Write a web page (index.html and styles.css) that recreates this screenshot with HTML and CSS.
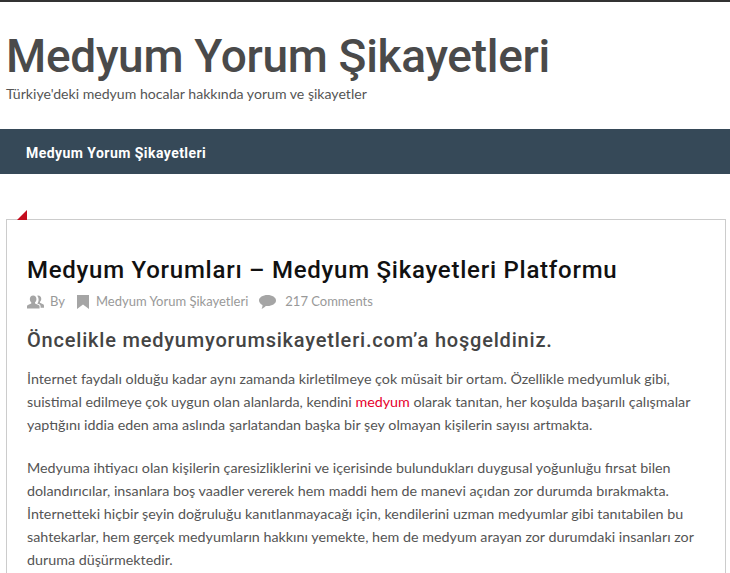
FILE: index.html
```html
<!DOCTYPE html>
<html lang="tr">
<head>
    <meta charset="UTF-8">
    <meta name="viewport" content="width=device-width, initial-scale=1.0">
    <title>Medyum Yorum Şikayetleri</title>
    <link rel="stylesheet" href="styles.css">
</head>
<body>
    <header class="site-header">
        <h1 class="site-title">Medyum Yorum Şikayetleri</h1>
        <p class="site-desc">Türkiye'deki medyum hocalar hakkında yorum ve şikayetler</p>
    </header>
    <nav class="main-nav">
        <a href="#">Medyum Yorum Şikayetleri</a>
    </nav>
    <main class="content">
        <article class="post">
            <span class="corner"></span>
            <h2 class="post-title">Medyum Yorumları – Medyum Şikayetleri Platformu</h2>
            <div class="post-meta">
                <svg class="icon icon-users" viewBox="0 0 18 14"><path d="M6.500 0c2.200 0 3.500 1.700 3.500 3.800 0 1.400-.6 2.800-1.500 3.500v1.200l3.700 1.600c.7.300 1.100.8 1.100 1.500V14H0v-2.400c0-.7.300-1.200 1-1.500l3.500-1.600V7.300C3.600 6.600 3 5.200 3 3.800 3 1.700 4.300 0 6.500 0z"/><path d="M11.800 0c2 0 3.300 1.600 3.300 3.500 0 1.300-.5 2.600-1.400 3.300v1.100l3.300 1.500c.7.300 1 .8 1 1.500V13h-3.600v-1.300c0-1-.6-1.800-1.500-2.200l-2-1c.9-1 1.400-2.500 1.400-4 0-1.300-.4-2.500-1.100-3.500C10.600.3 11.100 0 11.800 0z"/></svg>
                <span class="meta-by">By</span>
                <svg class="icon icon-bookmark" viewBox="0 0 12 14"><path d="M0 0h12v14L6 9.500 0 14z"/></svg>
                <span class="meta-cat">Medyum Yorum Şikayetleri</span>
                <svg class="icon icon-comment" viewBox="0 0 17 14"><path d="M8.500 0C13.200 0 17 2.400 17 5.500S13.200 11 8.500 11c-.6 0-1.200 0-1.700-.1C5.500 12.200 3.800 13.500 2.500 14c.6-1 1-2.400 1-4C1.400 9 0 7.400 0 5.500 0 2.400 3.800 0 8.500 0z"/></svg>
                <span>217 Comments</span>
            </div>
            <h3 class="post-sub">Öncelikle medyumyorumsikayetleri.com’a hoşgeldiniz.</h3>
            <p>İnternet faydalı olduğu kadar aynı zamanda kirletilmeye çok müsait bir ortam. Özellikle medyumluk gibi, suistimal edilmeye çok uygun olan alanlarda, kendini <a href="#">medyum</a> olarak tanıtan, her koşulda başarılı çalışmalar yaptığını iddia eden ama aslında şarlatandan başka bir şey olmayan kişilerin sayısı artmakta.</p>
            <p>Medyuma ihtiyacı olan kişilerin çaresizliklerini ve içerisinde bulundukları duygusal yoğunluğu fırsat bilen dolandırıcılar, insanlara boş vaadler vererek hem maddi hem de manevi açıdan zor durumda bırakmakta. İnternetteki hiçbir şeyin doğruluğu kanıtlanmayacağı için, kendilerini uzman medyumlar gibi tanıtabilen bu sahtekarlar, hem gerçek medyumların hakkını yemekte, hem de medyum arayan zor durumdaki insanları zor duruma düşürmektedir.</p>
        </article>
    </main>
</body>
</html>
```

FILE: styles.css
```css
html{
    height: 100%;
    overflow: hidden;
}
body{
    font-family: Lato, "Open Sans", sans-serif;
    font-size: 14.3px;
    line-height: 23px;
    margin: 0;
    padding: 0;
    color: #555;
    background: #fff;
    border-top: 2px solid #333;
}
.site-header{
    padding: 26px 6px 0;
    height: 101px;
}
.site-title{
    font-family: Roboto, sans-serif;
    font-size: 46px;
    line-height: 56px;
    font-weight: 500;
    letter-spacing: -0.3px;
    color: #4a4a4a;
    margin: 0;
}
.site-desc{
    margin: 0;
    font-size: 14.1px;
    line-height: 20px;
    color: #555;
}
.main-nav{
    background: #364958;
    height: 45px;
    display: flex;
    align-items: center;
    padding-left: 26px;
}
.main-nav a{
    font-family: Roboto, sans-serif;
    font-size: 14px;
    line-height: 20px;
    padding-top: 2px;
    font-weight: 700;
    letter-spacing: 0.45px;
    color: #fff;
    text-decoration: none;
}
.content{
    padding: 45px 4px 0 6px;
}
.post{
    position: relative;
    border: 1px solid #ccc;
    padding: 35px 20px 0;
}
.corner{
    position: absolute;
    top: -10px;
    left: 10px;
    width: 0;
    height: 0;
    border-left: 10px solid transparent;
    border-bottom: 10px solid #c40d1e;
}
.post-title{
    font-family: Roboto, sans-serif;
    font-size: 24px;
    line-height: 30px;
    font-weight: 500;
    letter-spacing: 0.75px;
    color: #111;
    margin: 0;
}
.post-meta{
    display: flex;
    align-items: center;
    margin-top: 5px;
    font-size: 13px;
    color: #999;
}
.icon{
    fill: #a5a5a5;
    height: 14px;
}
.icon-users{ width: 17px; margin-right: 6px; }
.icon-bookmark{ width: 12px; margin-left: 12px; margin-right: 7px; }
.icon-comment{ width: 17px; margin-left: 11px; margin-right: 9px; }
.post-sub{
    font-family: Roboto, sans-serif;
    font-size: 20px;
    line-height: 26px;
    font-weight: 500;
    letter-spacing: 0.8px;
    color: #444;
    margin: 14px 0 0;
}
.post p{
    margin: 14px 0 20px;
}
.post a{
    color: #e6002d;
    text-decoration: none;
}
```
